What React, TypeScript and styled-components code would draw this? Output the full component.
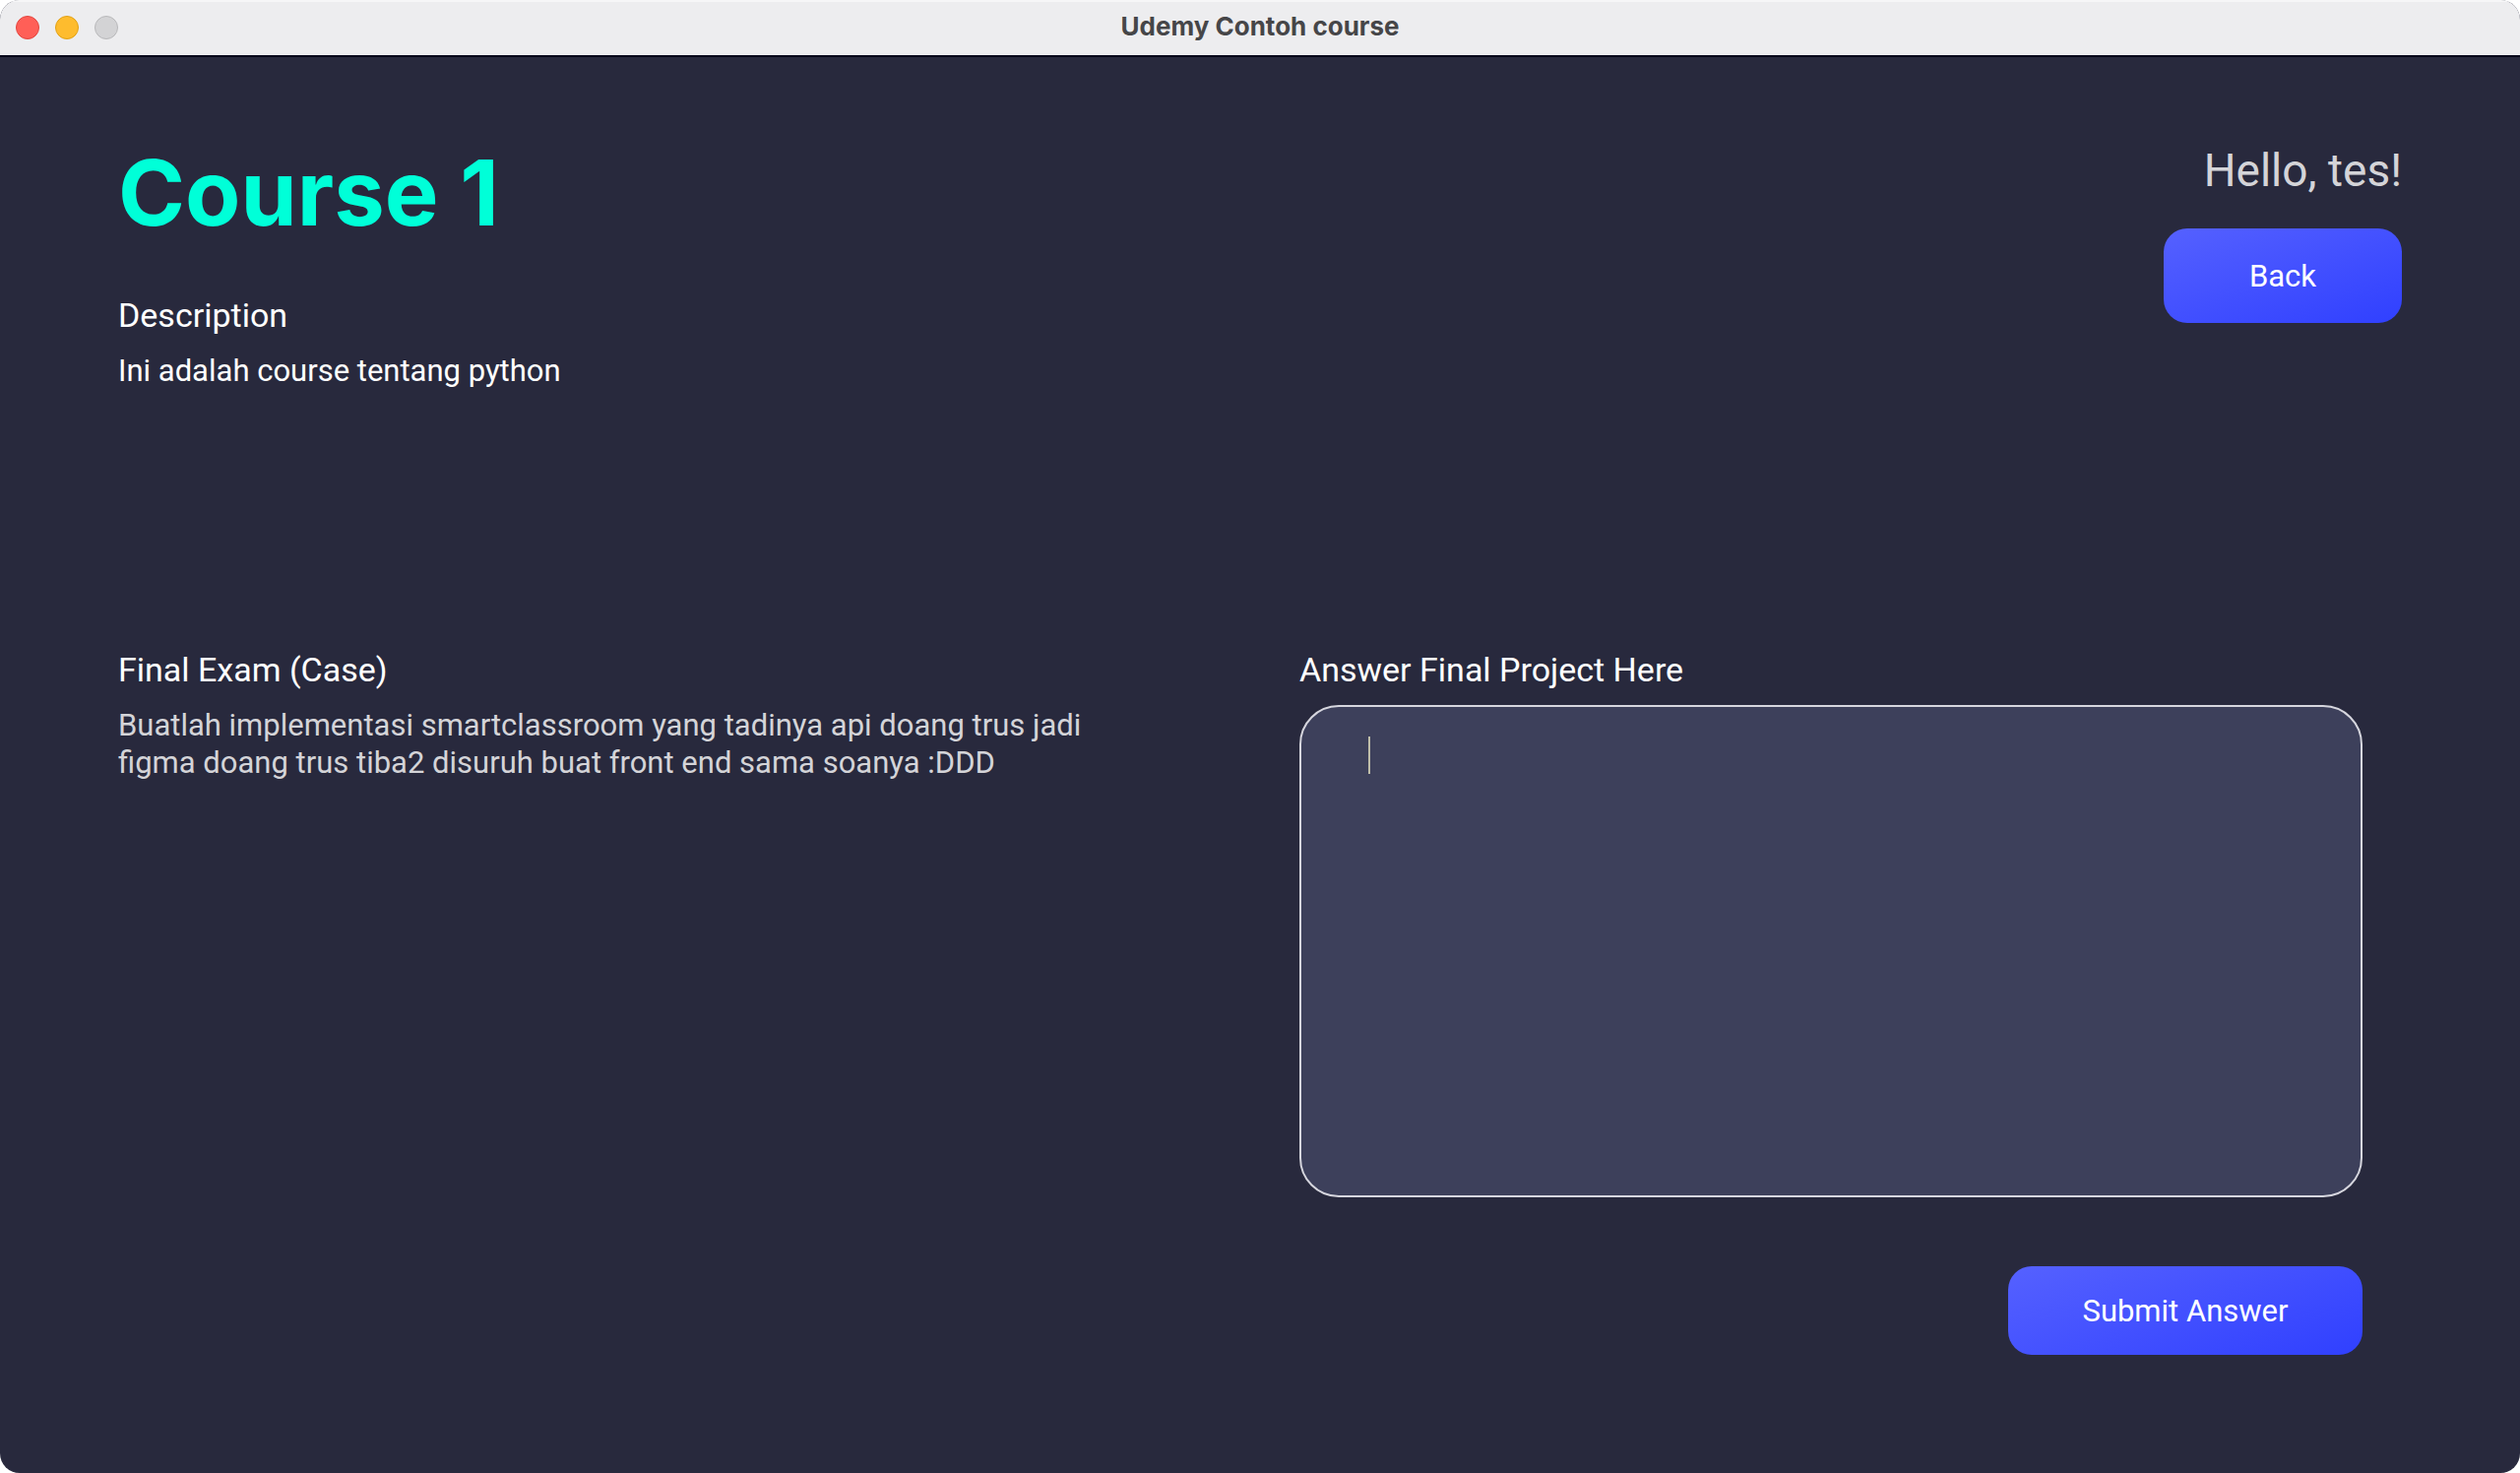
import React from "react";
import styled, { createGlobalStyle } from "styled-components";

const GlobalStyle = createGlobalStyle`
  * { box-sizing: border-box; }
  body { margin: 0; background: #ffffff; }
  h1, h2, p { margin: 0; font-weight: 400; }
`;

const Window = styled.div`
  min-height: 100vh;
  display: flex;
  flex-direction: column;
  border-radius: 20px;
  overflow: hidden;
  background: #28293d;
  color: #ffffff;
  font-family: Roboto, "Liberation Sans", sans-serif;
`;

const TitleBar = styled.header`
  display: grid;
  grid-template-columns: 1fr auto 1fr;
  align-items: center;
  height: 58px;
  padding: 0 16px;
  background: #ededef;
  box-shadow: inset 0 2px #f6f6f7;
  border-bottom: 2px solid #06061a;
`;

const Lights = styled.div`
  display: flex;
  gap: 16px;
`;

const Light = styled.button<{ $fill: string; $edge: string }>`
  width: 24px;
  height: 24px;
  padding: 0;
  border: 1px solid ${(p) => p.$edge};
  border-radius: 50%;
  background: ${(p) => p.$fill};
`;

const WindowTitle = styled.div`
  padding-bottom: 2px;
  color: #464648;
  font-family: Inter, "Liberation Sans", sans-serif;
  font-size: 26px;
  line-height: 32px;
  font-weight: 700;
`;

const Top = styled.section`
  display: flex;
  justify-content: space-between;
  align-items: flex-start;
  padding: 80px 120px 0;
`;

const CourseTitle = styled.h1`
  margin-bottom: 44px;
  color: #00ffd8;
  font-family: Inter, "Liberation Sans", sans-serif;
  font-size: 92px;
  line-height: 116px;
  font-weight: 700;
`;

const SectionTitle = styled.h2`
  font-size: 34px;
  line-height: 44px;
`;

const Text = styled.p<{ $muted?: boolean }>`
  max-width: 1000px;
  margin-top: 16px;
  color: ${(p) => (p.$muted ? "#d4d4d8" : "#ffffff")};
  font-size: 31px;
  line-height: 38px;
`;

const Account = styled.div`
  display: flex;
  flex-direction: column;
  align-items: flex-end;
  gap: 30px;
  padding-top: 6px;
`;

const Greeting = styled.p`
  color: #d4d4d8;
  font-size: 46px;
  line-height: 58px;
`;

const Button = styled.button<{ $wide?: boolean }>`
  width: ${(p) => (p.$wide ? 360 : 242)}px;
  height: ${(p) => (p.$wide ? 90 : 96)}px;
  padding: 2px 0 0;
  border: 0;
  border-radius: 24px;
  background: linear-gradient(160deg, #5561ff 0%, #3040ff 100%);
  color: #ffffff;
  font-family: inherit;
  font-size: 31px;
  line-height: 38px;
`;

const Exam = styled.main`
  display: grid;
  grid-template-columns: 1fr 1fr;
  gap: 120px;
  padding: 262px 160px 120px 120px;
`;

const AnswerForm = styled.form`
  display: flex;
  flex-direction: column;
`;

const AnswerLabel = styled.label`
  font-size: 34px;
  line-height: 44px;
`;

const Field = styled.div`
  position: relative;
  display: flex;
  margin: 14px 0 70px;
`;

const Answer = styled.textarea`
  flex: 1;
  height: 500px;
  padding: 30px 68px;
  border: 2px solid #d6d6de;
  border-radius: 40px;
  outline: 0;
  resize: none;
  background: #3d405b;
  color: #ffffff;
  caret-color: transparent;
  font-family: inherit;
  font-size: 31px;
  line-height: 38px;
`;

const Caret = styled.span`
  position: absolute;
  top: 32px;
  left: 70px;
  width: 2px;
  height: 38px;
  background: #bfbda9;
  pointer-events: none;
`;

const Actions = styled.div`
  display: flex;
  justify-content: flex-end;
`;

export default function App() {
  return (
    <Window>
      <GlobalStyle />
      <TitleBar>
        <Lights>
          <Light type="button" aria-label="Close" $fill="#ff5f57" $edge="#e2463f" />
          <Light type="button" aria-label="Minimize" $fill="#febc2e" $edge="#e1a116" />
          <Light type="button" aria-label="Zoom" disabled $fill="#d3d3d5" $edge="#b8b8ba" />
        </Lights>
        <WindowTitle>Udemy Contoh course</WindowTitle>
      </TitleBar>
      <Top>
        <div>
          <CourseTitle>Course 1</CourseTitle>
          <SectionTitle>Description</SectionTitle>
          <Text>Ini adalah course tentang python</Text>
        </div>
        <Account>
          <Greeting>Hello, tes!</Greeting>
          <Button type="button">Back</Button>
        </Account>
      </Top>
      <Exam>
        <section>
          <SectionTitle>Final Exam (Case)</SectionTitle>
          <Text $muted>
            Buatlah implementasi smartclassroom yang tadinya api doang trus jadi figma doang trus
            tiba2 disuruh buat front end sama soanya :DDD
          </Text>
        </section>
        <AnswerForm onSubmit={(e) => e.preventDefault()}>
          <AnswerLabel htmlFor="answer">Answer Final Project Here</AnswerLabel>
          <Field>
            <Answer id="answer" />
            <Caret />
          </Field>
          <Actions>
            <Button type="submit" $wide>
              Submit Answer
            </Button>
          </Actions>
        </AnswerForm>
      </Exam>
    </Window>
  );
}
